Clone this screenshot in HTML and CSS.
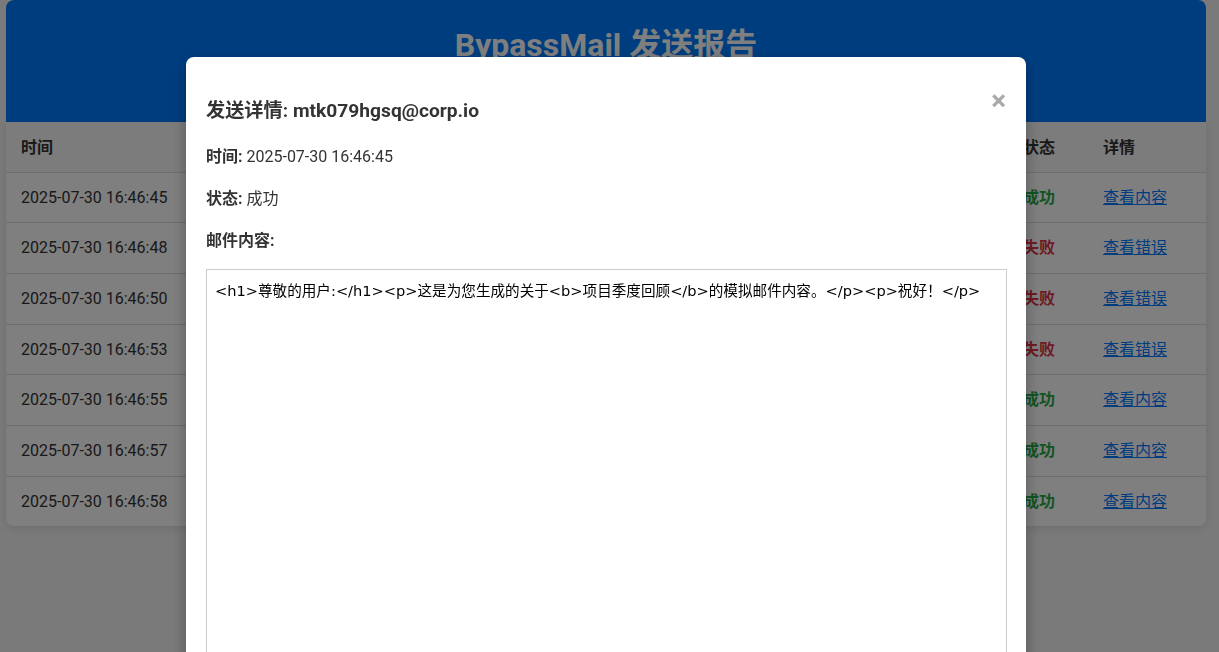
FILE: index.html
```html
<!DOCTYPE html>
<html lang="zh-CN">
<head>
<meta charset="utf-8">
<title>BypassMail 发送报告</title>
<link rel="stylesheet" href="styles.css">
</head>
<body>
<div class="page">
  <header class="report-header">
    <h1>BypassMail 发送报告</h1>
  </header>
  <table class="report-table">
    <colgroup>
      <col class="c-time"><col class="c-status"><col class="c-detail">
    </colgroup>
    <thead>
      <tr><th>时间</th><th>状态</th><th>详情</th></tr>
    </thead>
    <tbody>
      <tr><td>2025-07-30 16:46:45</td><td class="ok">成功</td><td><a href="#">查看内容</a></td></tr>
      <tr><td>2025-07-30 16:46:48</td><td class="fail">失败</td><td><a href="#">查看错误</a></td></tr>
      <tr><td>2025-07-30 16:46:50</td><td class="fail">失败</td><td><a href="#">查看错误</a></td></tr>
      <tr><td>2025-07-30 16:46:53</td><td class="fail">失败</td><td><a href="#">查看错误</a></td></tr>
      <tr><td>2025-07-30 16:46:55</td><td class="ok">成功</td><td><a href="#">查看内容</a></td></tr>
      <tr><td>2025-07-30 16:46:57</td><td class="ok">成功</td><td><a href="#">查看内容</a></td></tr>
      <tr><td>2025-07-30 16:46:58</td><td class="ok">成功</td><td><a href="#">查看内容</a></td></tr>
    </tbody>
  </table>
</div>

<div class="overlay">
  <div class="modal">
    <span class="close">&times;</span>
    <h3>发送详情: mtk079hgsq@corp.io</h3>
    <p><strong>时间:</strong> 2025-07-30 16:46:45</p>
    <p><strong>状态:</strong> 成功</p>
    <p><strong>邮件内容:</strong></p>
    <textarea class="content" readonly>&lt;h1&gt;尊敬的用户:&lt;/h1&gt;&lt;p&gt;这是为您生成的关于&lt;b&gt;项目季度回顾&lt;/b&gt;的模拟邮件内容。&lt;/p&gt;&lt;p&gt;祝好！&lt;/p&gt;</textarea>
  </div>
</div>
</body>
</html>
```

FILE: styles.css
```css
html, body {
  margin: 0;
  padding: 0;
}
body {
  font-family: Roboto, "Noto Sans CJK SC", sans-serif;
  font-size: 16px;
  line-height: 1.6;
  color: #333;
  background: #f4f4f4;
  height: 652px;
  overflow: hidden;
}
.page {
  width: 1200px;
  margin: 0 0 0 6px;
}
.report-header {
  background: #007bff;
  color: #fff;
  text-align: center;
  border-radius: 8px 8px 0 0;
  padding: 24px 20px 56px;
}
.report-header h1 {
  margin: 0;
  font-size: 32px;
  line-height: 42px;
  font-weight: 700;
}
.report-table {
  width: 1200px;
  table-layout: fixed;
  border-collapse: collapse;
  background: #fff;
  box-shadow: 0 2px 8px rgba(0,0,0,0.1);
  border-radius: 0 0 8px 8px;
  overflow: hidden;
}
.c-time { width: 1002px; }
.c-status { width: 80px; }
.c-detail { width: 118px; }
.report-table th,
.report-table td {
  text-align: left;
  padding: 15px;
  line-height: 19.67px;
  border-bottom: 1px solid #ddd;
  white-space: nowrap;
}
.report-table th {
  background: #f8f9fa;
  font-weight: 700;
  padding-top: 16px;
  padding-bottom: 14px;
}
.report-table tbody tr:last-child td {
  border-bottom: none;
}
.ok { color: #28a745; font-weight: 700; }
.fail { color: #dc3545; font-weight: 700; }
.report-table a { color: #007bff; text-decoration: underline; }

.overlay {
  position: fixed;
  inset: 0;
  background: rgba(0,0,0,0.5);
  display: flex;
  justify-content: center;
  align-items: flex-start;
  padding-right: 7px;
}
.modal {
  position: relative;
  width: 800px;
  margin-top: 57px;
  background: #fff;
  padding: 20px;
  border-radius: 8px;
  box-shadow: 0 5px 15px rgba(0,0,0,0.3);
  flex: none;
}
.modal h3 {
  margin: 18.72px 0;
  font-size: 19.2px;
  line-height: 30px;
  font-weight: 700;
}
.modal p {
  margin: 16px 0;
}
.close {
  position: absolute;
  top: 30px;
  right: 20px;
  color: #aaa;
  font-size: 28px;
  font-weight: 700;
  line-height: 1;
}
.content {
  display: block;
  box-sizing: border-box;
  width: 801px;
  height: 420px;
  margin: 0;
  padding: 10px 8px;
  border: 1px solid #ccc;
  font-family: "DejaVu Sans", "Noto Sans CJK SC", sans-serif;
  font-size: 14.6px;
  line-height: 21px;
  color: #000;
  resize: none;
}
```
